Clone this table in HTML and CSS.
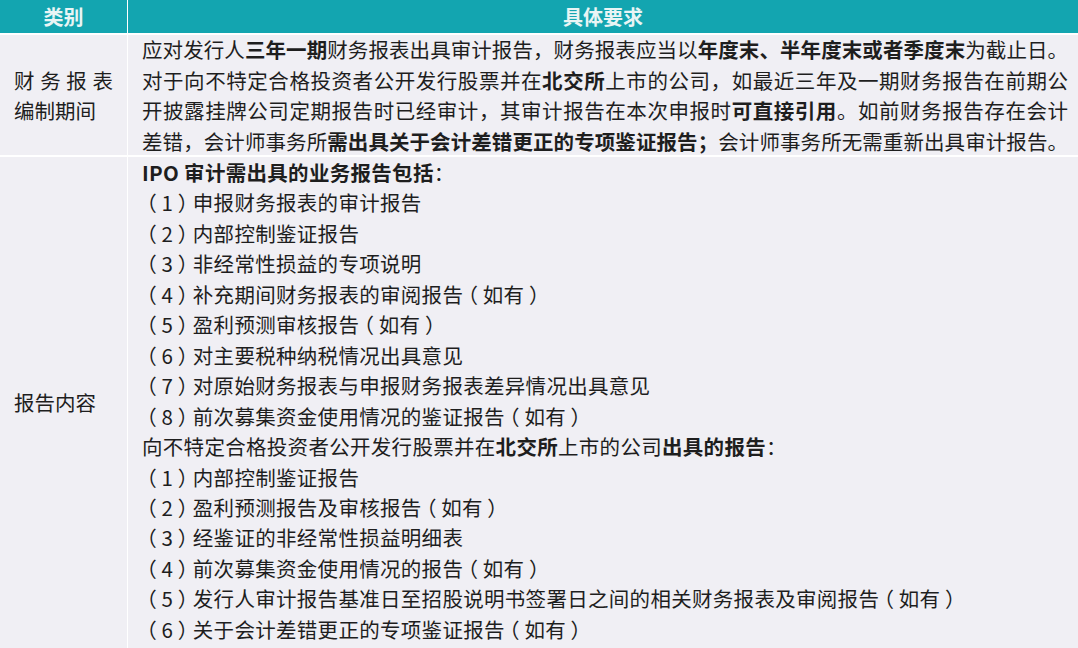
FILE: index.html
```html
<!DOCTYPE html>
<html lang="zh-CN">
<head>
<meta charset="utf-8">
<link rel="stylesheet" href="styles.css">
</head>
<body>
<div class="table">
  <div class="head">类别</div>
  <div class="head">具体要求</div>

  <div class="cat"><div class="cat-text">财务报表编制期间</div></div>
  <div class="detail">
    <div class="jl">应对发行人<b>三年一期</b>财务报表出具审计报告，财务报表应当以<b>年度末、半年度末或者季度末</b>为截止日。</div>
    <div class="jl">对于向不特定合格投资者公开发行股票并在<b>北交所</b>上市的公司，如最近三年及一期财务报告在前期公</div>
    <div class="jl">开披露挂牌公司定期报告时已经审计，其审计报告在本次申报时<b>可直接引用</b>。如前财务报告存在会计</div>
    <div class="jl">差错，会计师事务所<b>需出具关于会计差错更正的专项鉴证报告；</b>会计师事务所无需重新出具审计报告。</div>
  </div>

  <div class="cat"><div class="cat-text">报告内容</div></div>
  <div class="detail list">
    <div class="ln"><b>IPO 审计需出具的业务报告包括</b>：</div>
    <div class="ln"><span class="pr">（</span>1<span class="pr">）</span>申报财务报表的审计报告</div>
    <div class="ln"><span class="pr">（</span>2<span class="pr">）</span>内部控制鉴证报告</div>
    <div class="ln"><span class="pr">（</span>3<span class="pr">）</span>非经常性损益的专项说明</div>
    <div class="ln"><span class="pr">（</span>4<span class="pr">）</span>补充期间财务报表的审阅报告<span class="pr">（</span>如有<span class="pr">）</span></div>
    <div class="ln"><span class="pr">（</span>5<span class="pr">）</span>盈利预测审核报告<span class="pr">（</span>如有<span class="pr">）</span></div>
    <div class="ln"><span class="pr">（</span>6<span class="pr">）</span>对主要税种纳税情况出具意见</div>
    <div class="ln"><span class="pr">（</span>7<span class="pr">）</span>对原始财务报表与申报财务报表差异情况出具意见</div>
    <div class="ln"><span class="pr">（</span>8<span class="pr">）</span>前次募集资金使用情况的鉴证报告<span class="pr">（</span>如有<span class="pr">）</span></div>
    <div class="ln">向不特定合格投资者公开发行股票并在<b>北交所</b>上市的公司<b>出具的报告</b>：</div>
    <div class="ln"><span class="pr">（</span>1<span class="pr">）</span>内部控制鉴证报告</div>
    <div class="ln"><span class="pr">（</span>2<span class="pr">）</span>盈利预测报告及审核报告<span class="pr">（</span>如有<span class="pr">）</span></div>
    <div class="ln"><span class="pr">（</span>3<span class="pr">）</span>经鉴证的非经常性损益明细表</div>
    <div class="ln"><span class="pr">（</span>4<span class="pr">）</span>前次募集资金使用情况的报告<span class="pr">（</span>如有<span class="pr">）</span></div>
    <div class="ln"><span class="pr">（</span>5<span class="pr">）</span>发行人审计报告基准日至招股说明书签署日之间的相关财务报表及审阅报告<span class="pr">（</span>如有<span class="pr">）</span></div>
    <div class="ln"><span class="pr">（</span>6<span class="pr">）</span>关于会计差错更正的专项鉴证报告<span class="pr">（</span>如有<span class="pr">）</span></div>
  </div>
</div>
</body>
</html>
```
FILE: styles.css
```css
html, body {
  margin: 0;
  padding: 0;
  background: #ffffff;
}
body {
  width: 1078px;
  height: 648px;
  overflow: hidden;
  font-family: "Noto Sans CJK SC", "Noto Sans", sans-serif;
  color: #1e1e1e;
}
.table {
  display: grid;
  grid-template-columns: 127px 1fr;
  grid-template-rows: 33px 120px 1fr;
  column-gap: 1px;
  row-gap: 2px;
  height: 648px;
  background: #ffffff;
}
.head {
  background: #13a5b0;
  color: #e9f5f5;
  font-weight: 700;
  font-size: 20px;
  display: flex;
  align-items: center;
  justify-content: center;
  line-height: 1;
}
.cat {
  background: #f0eff4;
  display: flex;
  align-items: center;
  padding: 0 14px 0 14px;
  font-size: 20.5px;
  line-height: 30.5px;
}
.cat-text {
  width: 100%;
  text-align: justify;
}
.detail {
  background: #f0eff4;
  padding: 0 10px 0 14px;
  font-size: 20.5px;
  line-height: 30.5px;
  display: flex;
  flex-direction: column;
  justify-content: center;
  overflow: visible;
}
.detail.list {
  justify-content: flex-start;
  line-height: 30.45px;
  letter-spacing: 0.3px;
}
.jl {
  text-align: justify;
  text-align-last: justify;
  white-space: nowrap;
}
.ln {
  white-space: nowrap;
}
b {
  font-weight: 700;
}
.pr {
  font-feature-settings: "halt" 1;
  padding: 0 0.22em;
}
```
